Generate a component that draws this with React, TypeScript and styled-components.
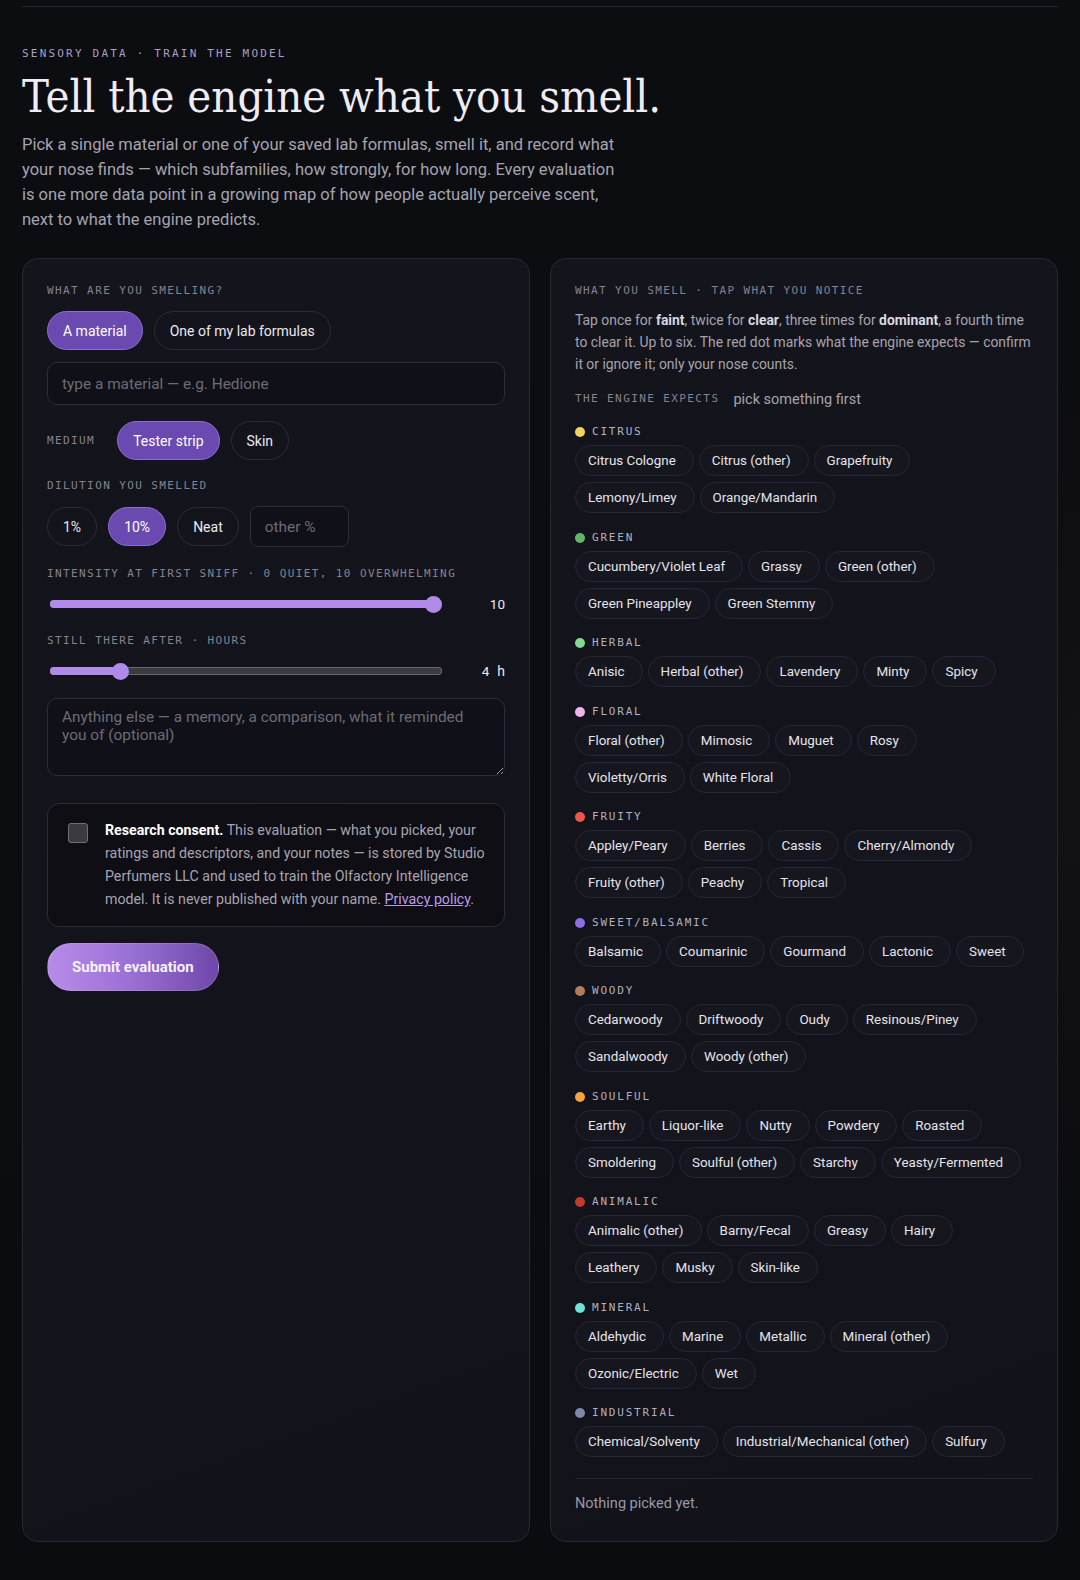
import styled, { createGlobalStyle } from "styled-components";

const GlobalStyle = createGlobalStyle`
  * { box-sizing: border-box; }
  body {
    margin: 0;
    background: #0b0c10;
    font-family: Roboto, "Liberation Sans", sans-serif;
    color: #e6e4ee;
  }
`;

const MONO = `"DejaVu Sans Mono", "Liberation Mono", monospace`;

type Family = { name: string; color: string; notes: string[] };

const FAMILIES: Family[] = [
  { name: "Citrus", color: "#f3d060", notes: ["Citrus Cologne", "Citrus (other)", "Grapefruity", "Lemony/Limey", "Orange/Mandarin"] },
  { name: "Green", color: "#5fb866", notes: ["Cucumbery/Violet Leaf", "Grassy", "Green (other)", "Green Pineappley", "Green Stemmy"] },
  { name: "Herbal", color: "#86d98f", notes: ["Anisic", "Herbal (other)", "Lavendery", "Minty", "Spicy"] },
  { name: "Floral", color: "#f2b3e6", notes: ["Floral (other)", "Mimosic", "Muguet", "Rosy", "Violetty/Orris", "White Floral"] },
  { name: "Fruity", color: "#ef5548", notes: ["Appley/Peary", "Berries", "Cassis", "Cherry/Almondy", "Fruity (other)", "Peachy", "Tropical"] },
  { name: "Sweet/Balsamic", color: "#8c6ee6", notes: ["Balsamic", "Coumarinic", "Gourmand", "Lactonic", "Sweet"] },
  { name: "Woody", color: "#b08058", notes: ["Cedarwoody", "Driftwoody", "Oudy", "Resinous/Piney", "Sandalwoody", "Woody (other)"] },
  { name: "Soulful", color: "#f5a243", notes: ["Earthy", "Liquor-like", "Nutty", "Powdery", "Roasted", "Smoldering", "Soulful (other)", "Starchy", "Yeasty/Fermented"] },
  { name: "Animalic", color: "#c4392e", notes: ["Animalic (other)", "Barny/Fecal", "Greasy", "Hairy", "Leathery", "Musky", "Skin-like"] },
  { name: "Mineral", color: "#6ee3d6", notes: ["Aldehydic", "Marine", "Metallic", "Mineral (other)", "Ozonic/Electric", "Wet"] },
  { name: "Industrial", color: "#7d8aa8", notes: ["Chemical/Solventy", "Industrial/Mechanical (other)", "Sulfury"] },
];

const Slider = ({ value, max }: { value: number; max: number }) => {
  const pct = value / max;
  return (
    <TrackWrap>
      <Track>
        <Fill style={{ width: `calc(${pct} * (100% - 17px) + 8.5px)` }} />
        <Thumb style={{ left: `calc(${pct} * (100% - 17px))` }} />
      </Track>
    </TrackWrap>
  );
};

export default function App() {
  return (
    <Page>
      <GlobalStyle />
      <TopRule />
      <Hero>
        <Eyebrow>Sensory data · Train the model</Eyebrow>
        <Title>Tell the engine what you smell.</Title>
        <Lede>
          Pick a single material or one of your saved lab formulas, smell it, and record what
          your nose finds — which subfamilies, how strongly, for how long. Every evaluation
          is one more data point in a growing map of how people actually perceive scent,
          next to what the engine predicts.
        </Lede>
      </Hero>

      <Columns>
        <Panel>
          <Field>
            <Label>What are you smelling?</Label>
            <Row>
              <Toggle $active>A material</Toggle>
              <Toggle>One of my lab formulas</Toggle>
            </Row>
            <TextInput placeholder="type a material — e.g. Hedione" />
          </Field>

          <Row>
            <InlineLabel>Medium</InlineLabel>
            <Toggle $active>Tester strip</Toggle>
            <Toggle>Skin</Toggle>
          </Row>

          <DilutionField>
            <Label>Dilution you smelled</Label>
            <Row>
              <Toggle>1%</Toggle>
              <Toggle $active>10%</Toggle>
              <Toggle>Neat</Toggle>
              <SmallInput placeholder="other %" />
            </Row>
          </DilutionField>

          <SliderField>
            <Label>Intensity at first sniff · 0 quiet, 10 overwhelming</Label>
            <SliderRow>
              <Slider value={10} max={10} />
              <Value>10</Value>
            </SliderRow>
          </SliderField>

          <SliderField>
            <Label>Still there after · hours</Label>
            <SliderRow>
              <Slider value={4} max={24} />
              <Value>
                4<Unit>h</Unit>
              </Value>
            </SliderRow>
          </SliderField>

          <Notes placeholder="Anything else — a memory, a comparison, what it reminded you of (optional)" />

          <Consent>
            <Check />
            <ConsentText>
              <strong>Research consent.</strong> This evaluation — what you picked, your
              ratings and descriptors, and your notes — is stored by Studio Perfumers LLC
              and used to train the Olfactory Intelligence model. It is never published with
              your name. <a href="#privacy">Privacy policy</a>.
            </ConsentText>
          </Consent>

          <Submit>Submit evaluation</Submit>
        </Panel>

        <Panel>
          <Label>What you smell · tap what you notice</Label>
          <Intro>
            Tap once for <b>faint</b>, twice for <b>clear</b>, three times for <b>dominant</b>,
            a fourth time to clear it. Up to six. The red dot marks what the engine expects —
            confirm it or ignore it; only your nose counts.
          </Intro>
          <Expects>
            <Label as="span">The engine expects</Label>
            <span>pick something first</span>
          </Expects>

          <FamilyList>
            {FAMILIES.map((f) => (
              <FamilyBlock key={f.name}>
                <FamilyName>
                  <Dot $color={f.color} />
                  {f.name}
                </FamilyName>
                <Chips>
                  {f.notes.map((n) => (
                    <Chip key={n}>{n}</Chip>
                  ))}
                </Chips>
              </FamilyBlock>
            ))}
          </FamilyList>

          <Picked>Nothing picked yet.</Picked>
        </Panel>
      </Columns>
    </Page>
  );
}

const Page = styled.div`
  min-height: 1580px;
  padding: 6px 22px 40px;
  background:
    radial-gradient(ellipse 420px 600px at 100% 50%, rgba(110, 80, 50, 0.07), transparent 70%),
    linear-gradient(180deg, #0c0d11 0%, #0b0c10 100%);
`;

const TopRule = styled.div`
  height: 1px;
  background: #26272f;
`;

const Hero = styled.header`
  padding-top: 39px;
`;

const Eyebrow = styled.div`
  font-family: ${MONO};
  font-size: 11px;
  line-height: 16px;
  letter-spacing: 2.2px;
  text-transform: uppercase;
  color: #a99fc0;
`;

const Title = styled.h1`
  margin: 10px 0 0;
  font-family: "DejaVu Serif Condensed", "DejaVu Serif", "Liberation Serif", serif;
  font-stretch: semi-condensed;
  font-weight: 400;
  font-size: 45px;
  line-height: 50px;
  color: #efecf5;
`;

const Lede = styled.p`
  margin: 10px 0 0;
  max-width: 600px;
  font-size: 16.5px;
  line-height: 25px;
  color: #a6a3af;
`;

const Columns = styled.main`
  margin-top: 26px;
  display: grid;
  grid-template-columns: 1fr 1fr;
  gap: 20px;
  align-items: stretch;
`;

const Panel = styled.section`
  display: flex;
  flex-direction: column;
  gap: 16px;
  padding: 24px 24px 27px;
  border: 1px solid #272833;
  border-radius: 16px;
  background: linear-gradient(160deg, #13141c 0%, #11121a 100%);
`;

const Field = styled.div`
  display: flex;
  flex-direction: column;
  gap: 12px;
`;

const DilutionField = styled(Field)`
  margin-top: 2px;
`;

const SliderField = styled(Field)`
  margin-top: 3px;
`;

const Label = styled.div`
  font-family: ${MONO};
  font-size: 11px;
  line-height: 16px;
  letter-spacing: 1.4px;
  text-transform: uppercase;
  color: #85838f;
`;

const InlineLabel = styled(Label)`
  margin-right: 11px;
`;

const Row = styled.div`
  display: flex;
  align-items: center;
  gap: 11px;
`;

const Toggle = styled.button<{ $active?: boolean }>`
  height: 39px;
  padding: 0 15px;
  border-radius: 20px;
  border: 1px solid ${({ $active }) => ($active ? "#8d6fd2" : "#2b2c37")};
  background: ${({ $active }) => ($active ? "#6a49b0" : "transparent")};
  color: ${({ $active }) => ($active ? "#ffffff" : "#ebe9f1")};
  font-family: Roboto, sans-serif;
  font-size: 14px;
  cursor: pointer;
`;

const inputBase = `
  border: 1px solid #2c2d38;
  background: #101118;
  color: #e6e4ee;
  font-family: Roboto, sans-serif;
  font-size: 15.4px;
  outline: none;
  &::placeholder { color: #6d6b77; }
`;

const TextInput = styled.input`
  ${inputBase}
  height: 43px;
  width: 100%;
  padding: 0 14px;
  border-radius: 10px;
`;

const SmallInput = styled.input`
  ${inputBase}
  height: 41px;
  width: 99px;
  padding: 0 14px;
  border-radius: 8px;
`;

const SliderRow = styled.div`
  display: grid;
  grid-template-columns: 1fr 60px;
  align-items: center;
  height: 20px;
`;

const TrackWrap = styled.div`
  padding: 0 3px;
`;

const Track = styled.div`
  position: relative;
  height: 8px;
  border-radius: 4px;
  background: #3a3a3f;
  box-shadow: inset 0 0 0 1px #66666c;
`;

const Fill = styled.div`
  height: 100%;
  border-radius: 4px;
  background: #b08ae8;
`;

const Thumb = styled.div`
  position: absolute;
  top: 50%;
  width: 17px;
  height: 17px;
  margin-top: -8.5px;
  border-radius: 50%;
  background: #b08ae8;
`;

const Value = styled.div`
  text-align: right;
  font-size: 13.5px;
  color: #ebe9f1;
`;

const Unit = styled.span`
  margin-left: 8px;
  font-size: 14px;
`;

const Notes = styled.textarea`
  ${inputBase}
  margin-top: 1px;
  height: 78px;
  width: 100%;
  padding: 9px 14px;
  border-radius: 10px;
  line-height: 18px;
  resize: vertical;
`;

const Consent = styled.label`
  margin-top: 11px;
  display: grid;
  grid-template-columns: 20px 1fr;
  gap: 17px;
  padding: 15px 12px 15px 20px;
  border: 1px solid #2b2c36;
  border-radius: 12px;
  background: #0e0e14;
`;

const Check = styled.span`
  margin-top: 4px;
  width: 20px;
  height: 20px;
  border: 1.5px solid #6e6e74;
  border-radius: 3px;
  background: #3b3b3f;
`;

const ConsentText = styled.p`
  margin: 0;
  font-size: 14.2px;
  line-height: 23px;
  color: #a7a4b0;

  strong {
    color: #ffffff;
    font-weight: 700;
  }
  a {
    color: #b99be6;
    text-decoration: underline;
  }
`;

const Submit = styled.button`
  align-self: flex-start;
  height: 48px;
  padding: 0 24px;
  border-radius: 24px;
  border: 1px solid rgba(255, 255, 255, 0.14);
  background: linear-gradient(90deg, #b78ce8 0%, #9a6fd4 50%, #6f47a9 100%);
  color: #f7f1ff;
  font-family: Roboto, sans-serif;
  font-weight: 700;
  font-size: 15px;
  cursor: pointer;
`;

const Intro = styled.p`
  margin: -6px 0 0;
  font-size: 13.9px;
  line-height: 22px;
  color: #a6a3af;

  b {
    color: #d9d7e1;
    font-weight: 700;
  }
`;

const Expects = styled.div`
  display: flex;
  align-items: center;
  gap: 14px;
  height: 20px;
  margin-top: -2px;
  font-size: 14.5px;
  color: #a6a3af;
`;

const FamilyList = styled.div`
  display: flex;
  flex-direction: column;
  gap: 16.5px;
  margin-top: -1px;
`;

const FamilyBlock = styled.div`
  display: flex;
  flex-direction: column;
  gap: 5px;
`;

const FamilyName = styled.div`
  display: flex;
  align-items: center;
  gap: 7px;
  height: 16px;
  font-family: ${MONO};
  font-size: 11px;
  line-height: 16px;
  letter-spacing: 1.8px;
  text-transform: uppercase;
  color: #b3b0bd;
`;

const Dot = styled.span<{ $color: string }>`
  width: 10px;
  height: 10px;
  border-radius: 50%;
  background: ${({ $color }) => $color};
`;

const Chips = styled.div`
  display: flex;
  flex-wrap: wrap;
  gap: 6px 5px;
  max-width: 452px;
`;

const Chip = styled.button`
  height: 31px;
  padding: 0 17px 0 12px;
  border-radius: 16px;
  border: 1px solid #262733;
  background: #15161e;
  color: #e6e4ec;
  font-family: Roboto, sans-serif;
  font-size: 13.4px;
  cursor: pointer;
`;

const Picked = styled.div`
  margin-top: 5px;
  padding-top: 15px;
  border-top: 1px solid #262733;
  font-size: 14.5px;
  line-height: 20px;
  color: #9a98a4;
`;
